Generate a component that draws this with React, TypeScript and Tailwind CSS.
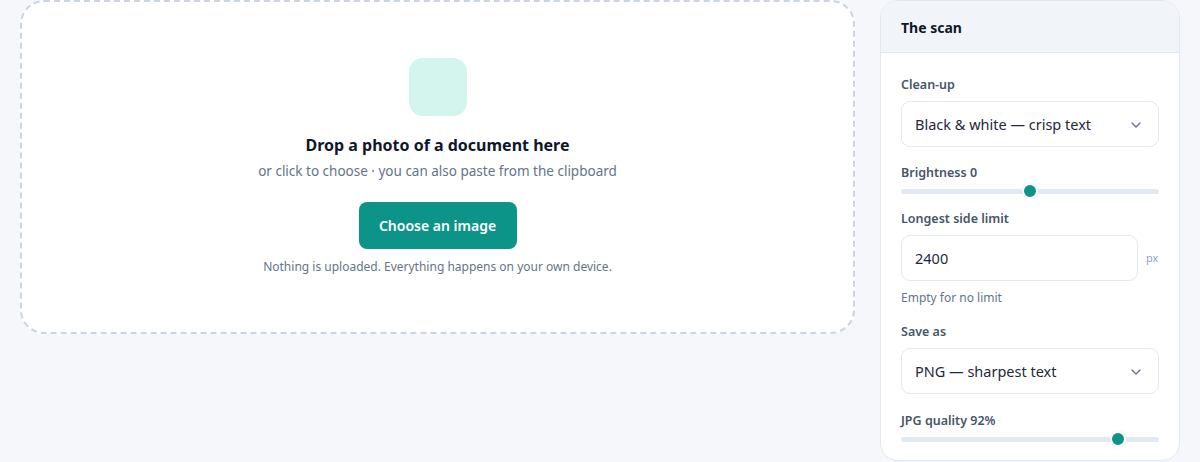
import type { ReactElement } from "react";
import { ChevronDown } from "lucide-react";

const FONT = "font-['Noto_Sans','Open_Sans',sans-serif]";

function Label({ children }: { children: string }): ReactElement {
  return (
    <div className="text-[12.5px] font-semibold leading-[18px] text-[#475569]">
      {children}
    </div>
  );
}

function FakeSelect({ value }: { value: string }): ReactElement {
  return (
    <div className="mt-[7px] flex h-[46px] items-center justify-between rounded-[9px] border border-[#e2e8f0] bg-white pl-[13px] pr-[14px] pt-[1px] text-[14.5px] text-[#1e293b]">
      <span>{value}</span>
      <ChevronDown className="h-4 w-4 text-[#64748b]" strokeWidth={2} />
    </div>
  );
}

function Slider({ thumb }: { thumb: string }): ReactElement {
  return (
    <div className="relative mt-[1px] flex h-4 items-center">
      <div className="h-[5px] w-full rounded-full bg-[#e2e8f0]" />
      <div
        className={`absolute top-0 h-4 w-4 rounded-full border-2 border-white bg-[#0d9488] shadow-[0_0_1px_rgba(0,0,0,0.15)] ${thumb}`}
      />
    </div>
  );
}

export default function App(): ReactElement {
  return (
    <div
      className={`${FONT} flex min-h-[462px] items-start gap-[25px] bg-[#f6f7fb] pl-[20px] pr-[20px]`}
    >
      <section className="flex h-[334px] w-[835px] shrink-0 flex-col items-center rounded-[24px] border-2 border-dashed border-[#cbd5e1] bg-white pt-[56px]">
        <div className="h-[58px] w-[58px] rounded-[14px] bg-[#d4f5ee]" />
        <h1 className="mt-[17px] text-[16px] font-bold leading-6 text-[#0f172a]">
          Drop a photo of a document here
        </h1>
        <p className="mt-[5px] text-[13.5px] leading-[18px] text-[#64748b]">
          or click to choose · you can also paste from the clipboard
        </p>
        <button
          className="mt-[22px] h-[47px] w-[158px] rounded-[8px] bg-[#0d9488] text-[14px] font-semibold text-white"
          type="button"
        >
          Choose an image
        </button>
        <p className="mt-[10px] text-[12px] leading-4 text-[#64748b]">
          Nothing is uploaded. Everything happens on your own device.
        </p>
      </section>

      <aside className="h-[461px] w-[300px] shrink-0 overflow-hidden rounded-[18px] border border-[#e2e8f0] bg-white">
        <header className="flex h-[52px] items-center border-b border-[#e2e8f0] bg-[#f1f5f9] px-[20px] pt-[2px] text-[14px] font-bold text-[#0f172a]">
          The scan
        </header>
        <div className="px-[20px] pt-[23px]">
          <Label>Clean-up</Label>
          <FakeSelect value="Black & white — crisp text" />

          <div className="mt-[17px]">
            <Label>Brightness 0</Label>
          </div>
          <Slider thumb="left-[121px]" />

          <div className="mt-[11px]">
            <Label>Longest side limit</Label>
          </div>
          <div className="mt-[7px] flex items-center gap-2">
            <div className="flex h-[46px] w-[237px] items-center rounded-[9px] border border-[#e2e8f0] bg-white pl-[13px] pt-[1px] text-[14.5px] text-[#1e293b]">
              2400
            </div>
            <span className="text-[11px] text-[#94a3b8]">px</span>
          </div>
          <p className="mt-[9px] text-[12px] leading-4 text-[#64748b]">
            Empty for no limit
          </p>

          <div className="mt-[17px]">
            <Label>Save as</Label>
          </div>
          <FakeSelect value="PNG — sharpest text" />

          <div className="mt-[18px]">
            <Label>JPG quality 92%</Label>
          </div>
          <Slider thumb="left-[209px]" />
        </div>
      </aside>
    </div>
  );
}
